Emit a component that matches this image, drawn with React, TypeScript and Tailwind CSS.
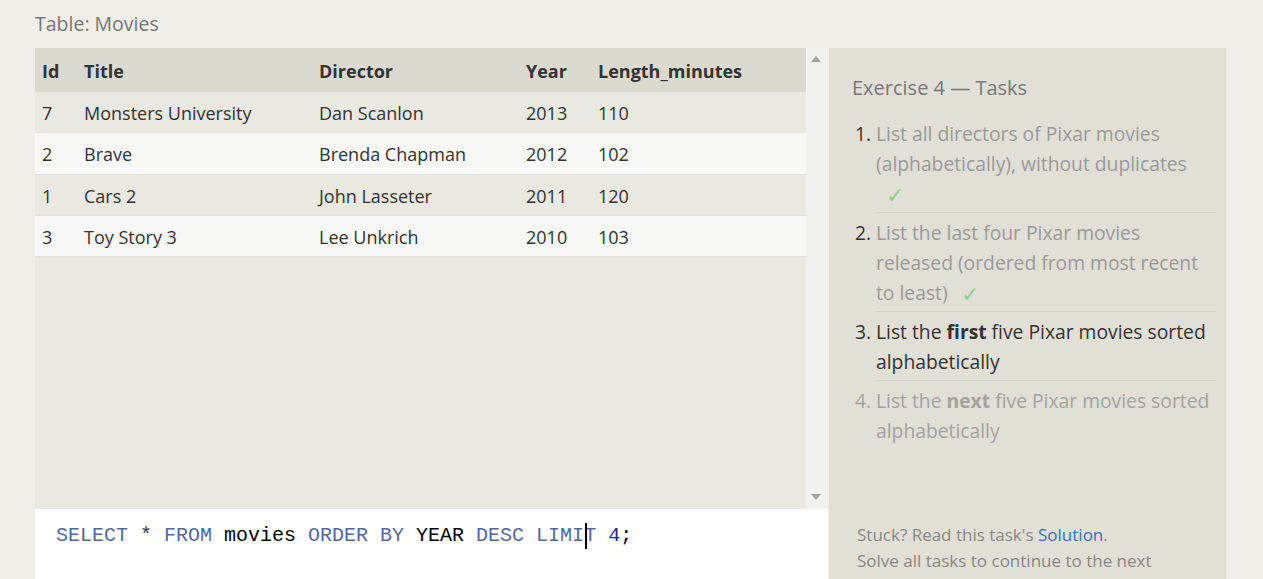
import React from "react";

const rows = [
  { id: "7", title: "Monsters University", director: "Dan Scanlon", year: "2013", len: "110" },
  { id: "2", title: "Brave", director: "Brenda Chapman", year: "2012", len: "102" },
  { id: "1", title: "Cars 2", director: "John Lasseter", year: "2011", len: "120" },
  { id: "3", title: "Toy Story 3", director: "Lee Unkrich", year: "2010", len: "103" },
];

export default function App() {
  return (
    <div
      className="w-full h-[579px] overflow-hidden bg-[#f0eee8] pl-[35px]"
      style={{ fontFamily: '"Open Sans", "Noto Sans", sans-serif' }}
    >
      <div className="pt-[10px] h-[48px] text-[19.5px] leading-[28px] text-[#777]">Table: Movies</div>
      <div className="flex">
        {/* left column */}
        <div className="w-[793px] flex flex-col">
          <div className="flex h-[461px]">
            <div className="w-[771px] bg-[#e9e8e1] text-[18px] text-[#333]">
              <div className="flex h-[44px] items-center pt-[3px] bg-[#dbdad0] font-bold">
                <div className="w-[42px] pl-[7px]">Id</div>
                <div className="w-[235px] pl-[7px]">Title</div>
                <div className="w-[207px] pl-[7px]">Director</div>
                <div className="w-[72px] pl-[7px]">Year</div>
                <div className="flex-1 pl-[7px]">Length_minutes</div>
              </div>
              {rows.map((r, i) => (
                <div
                  key={r.id}
                  className={
                    "flex h-[41.25px] items-center pt-[3px] border-b border-[#e4e3dc] " +
                    (i % 2 === 0 ? "bg-[#e9e8e1]" : "bg-[#f8f8f7]")
                  }
                >
                  <div className="w-[42px] pl-[7px]">{r.id}</div>
                  <div className="w-[235px] pl-[7px]">{r.title}</div>
                  <div className="w-[207px] pl-[7px]">{r.director}</div>
                  <div className="w-[72px] pl-[7px]">{r.year}</div>
                  <div className="flex-1 pl-[7px]">{r.len}</div>
                </div>
              ))}
            </div>
            <div className="w-[21px] bg-[#f1f1f0] flex flex-col items-center justify-between pt-[8px] pb-[9px] pr-[2px]">
              <svg width="10" height="6" viewBox="0 0 10 6">
                <polygon points="5,0 10,6 0,6" fill="#a3a3a3" />
              </svg>
              <svg width="10" height="6" viewBox="0 0 10 6">
                <polygon points="0,0 10,0 5,6" fill="#a3a3a3" />
              </svg>
            </div>
          </div>
          <div
            className="h-[80px] bg-white pl-[21px] pt-[14px] text-[20px] leading-[26px] whitespace-pre"
            style={{ fontFamily: '"Liberation Mono", "DejaVu Sans Mono", monospace' }}
          >
            <span className="text-[#55679c]">SELECT</span>
            <span className="text-[#333]"> * </span>
            <span className="text-[#55679c]">FROM</span>
            <span className="text-black"> movies </span>
            <span className="text-[#55679c]">ORDER BY</span>
            <span className="text-black"> YEAR </span>
            <span className="text-[#55679c]">DESC LIMI</span>
            <span className="relative">
              <span className="absolute left-[1px] top-[-1px] w-[2px] h-[26px] bg-black" />
            </span>
            <span className="text-[#55679c]">T</span>
            <span> </span>
            <span className="text-[#2323a8]">4</span>
            <span className="text-black">;</span>
          </div>
        </div>
        {/* right panel */}
        <div className="ml-[1px] w-[397px] h-[540px] bg-[#e1dfd6] pl-[23px] pr-[10px] pt-[27px]">
          <div className="text-[20px] leading-[26px] text-[#777]">Exercise 4 — Tasks</div>
          <ol className="list-decimal pl-[24px] mt-[13px] text-[19.3px] leading-[30px]">
            <li className="text-[#333] pt-[5px] pb-[3px] border-b border-[#d6d4ca]">
              <span className="text-[#9a9a9a]">List all directors of Pixar movies (alphabetically), without duplicates</span>
              <span className="block h-[30px] ml-[10px] text-[22px] leading-[30px] text-[#8fcf8f]">✓</span>
            </li>
            <li className="text-[#333] pt-[5px] pb-[3px] border-b border-[#d6d4ca]">
              <span className="text-[#9a9a9a]">List the last four Pixar movies released (ordered from most recent to least)</span>{" "}
              <span className="inline-block h-[30px] align-top ml-[8px] text-[22px] leading-[30px] text-[#8fcf8f]">✓</span>
            </li>
            <li className="text-[#333] pt-[5px] pb-[3px] border-b border-[#d6d4ca]">
              List the <b>first</b> five Pixar movies sorted alphabetically
            </li>
            <li className="text-[#a3a3a3] pt-[5px] pb-[3px]">
              List the <b>next</b> five Pixar movies sorted alphabetically
            </li>
          </ol>
          <div className="mt-[73px] pl-[5px] text-[17px] leading-[26px] text-[#888]">
            <div>
              Stuck? Read this task's <span className="text-[#3d6dc5]">Solution</span>.
            </div>
            <div>Solve all tasks to continue to the next</div>
          </div>
        </div>
      </div>
    </div>
  );
}
